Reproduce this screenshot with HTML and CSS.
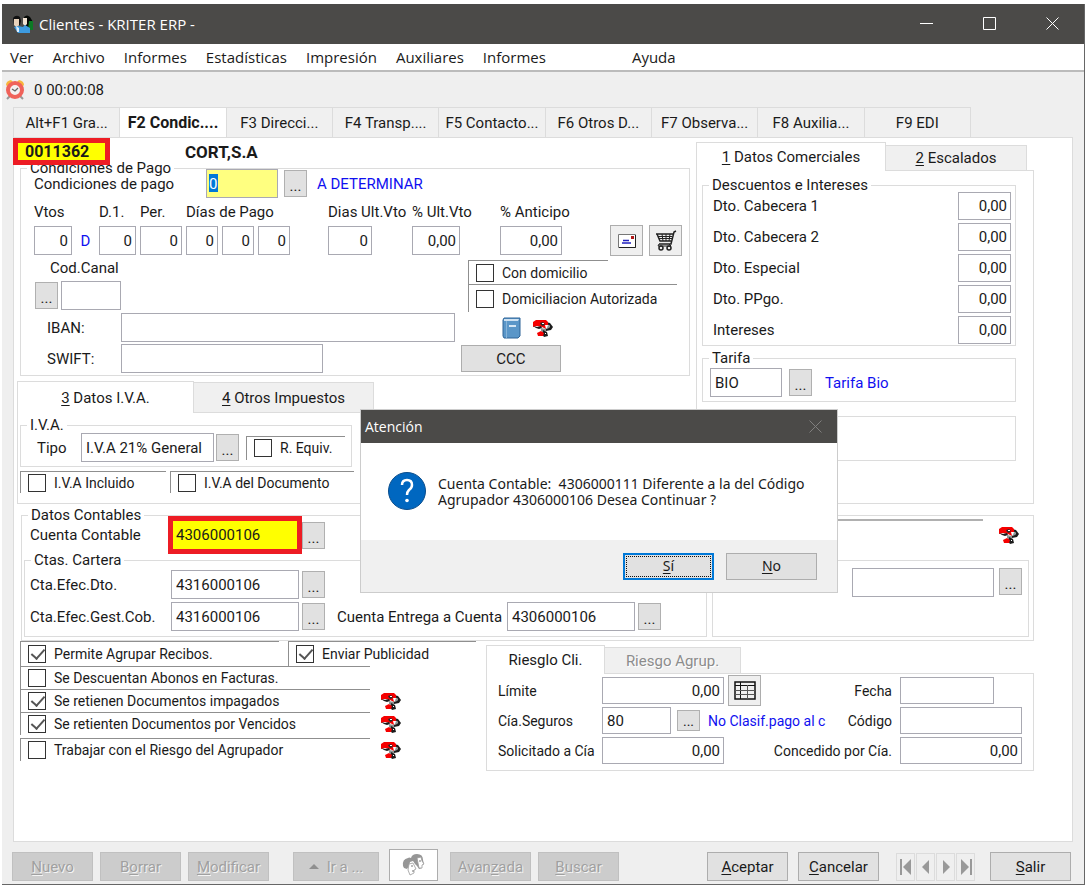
FILE: index.html
```html
<!DOCTYPE html>
<html lang="es">
<head>
<meta charset="utf-8">
<title>Clientes - KRITER ERP -</title>
<link rel="stylesheet" href="styles.css">
</head>
<body>
<svg class="defs" aria-hidden="true">
  <symbol id="phone" viewBox="0 0 20 18">
    <path d="M13 3l4 1 3 4-2 3-5 1-1-2 4-1 1-2-3-2z" fill="#1c1c1c"/>
    <path d="M15 6l2 1-1 2-2 0z" fill="#8d9696"/>
    <path d="M0 3l3-2h10l2 2v3l-3 0 1 4-4-2-5-1-4 1z" fill="#f50000"/>
    <path d="M0 7l4 1 4-1 1 2-3 1-3-1z" fill="#1c1c1c"/>
    <path d="M7 4l3-1 2 2-2 2-2-1z" fill="#2a2a2a"/><path d="M9 4h2v1H9z" fill="#fff"/>
    <path d="M8 9l5 1v2l-2 1-3-1z" fill="#8d9696"/>
    <path d="M10 11l4 2 1 4-4 1-2-3z" fill="#1c1c1c"/>
    <path d="M4 14l4-2 3 2-1 3H5z" fill="#f50000"/><path d="M12 14h1v1h-1z" fill="#fff"/>
  </symbol>
</svg>
<div class="window">
  <header class="titlebar">
    <svg class="app-icon" viewBox="0 0 22 20" aria-hidden="true">
      <path d="M12 3q3-3 6 0l3 5-1 8h-8z" fill="#050805"/><path d="M17 7h4v9h-5z" fill="#0d7a25"/>
      <path d="M1 4q3-4 7-1l1 4-1 4H2z" fill="#111"/>
      <path d="M2 5h5v6l-2 3-3-3z" fill="#e9d3bb"/><path d="M11 4h4v6l-2 2-2-2z" fill="#f0e2d2"/>
      <path d="M2 13l4-1 5 1 2-2 5 3v5H6z" fill="#3d9be0"/><path d="M4 12l3 2 0 4H5z" fill="#dcefff"/>
    </svg>
    <h1 class="title">Clientes - KRITER ERP -</h1>
    <div class="window-controls">
      <button aria-label="Minimizar"><svg viewBox="0 0 14 14"><path d="M0 6.5h13" stroke="#fff"/></svg></button>
      <button aria-label="Maximizar"><svg viewBox="0 0 14 14"><path d="M.5.5h12v12H.5z" fill="none" stroke="#fff"/></svg></button>
      <button aria-label="Cerrar"><svg viewBox="0 0 14 14"><path d="M.5.5l12 12M12.5.5l-12 12" stroke="#fff"/></svg></button>
    </div>
  </header>
  <nav class="menubar">
    <button>Ver</button><button>Archivo</button><button>Informes</button><button>Estadísticas</button><button>Impresión</button><button>Auxiliares</button><button>Informes</button><button class="help">Ayuda</button>
  </nav>
  <div class="toolbar">
    <svg class="clock" viewBox="0 0 20 21" aria-hidden="true">
      <path d="M1 6q0-4 5-5l2 2-5 5zM19 6q0-4-5-5l-2 2 5 5z" fill="#f8b63c"/>
      <path d="M5 17l-3 3M15 17l3 3" stroke="#999" stroke-width="2"/>
      <circle cx="10" cy="11" r="7" fill="#f4f0f0" stroke="#f0625a" stroke-width="4"/>
      <path d="M7 10l3 2 3-3" fill="none" stroke="#666" stroke-width="1.3"/>
    </svg>
    <span>0 00:00:08</span>
  </div>
  <div class="tabs main-tabs" role="tablist">
    <button class="tab" role="tab">Alt+F1 Gra...</button><button class="tab active" role="tab" aria-selected="true">F2 Condic....</button><button class="tab" role="tab">F3 Direcci...</button><button class="tab" role="tab">F4 Transp....</button><button class="tab" role="tab">F5 Contacto...</button><button class="tab" role="tab">F6 Otros D...</button><button class="tab" role="tab">F7 Observa...</button><button class="tab" role="tab">F8 Auxilia...</button><button class="tab" role="tab">F9 EDI</button>
  </div>
  <main class="page">
    <div class="upper">
      <div class="upper-left">
        <div class="client"><strong class="client-code">0011362</strong><strong class="client-name">CORT,S.A</strong></div>

        <fieldset class="group payment">
          <legend>Condiciones de Pago</legend>
          <div class="row">
            <label class="w-payment" for="pago">Condiciones de pago</label>
            <input id="pago" class="focused" value="0">
            <button class="more push" aria-label="Buscar condición">...</button>
            <span class="info">A DETERMINAR</span>
          </div>
          <div class="terms">
            <label class="c1" for="vtos">Vtos</label>
            <label class="c3" for="d1">D.1.</label>
            <label class="c4" for="per">Per.</label>
            <label class="c5" for="dias1">Días de Pago</label>
            <label class="c9" for="ult">Dias Ult.Vto</label>
            <label class="c11" for="pult">% Ult.Vto</label>
            <label class="c13" for="ant">% Anticipo</label>
            <input class="c1 num" id="vtos" value="0"><span class="c2 info">D</span>
            <input class="c3 num" id="d1" value="0">
            <input class="c4 num" id="per" value="0">
            <input class="c5 num" id="dias1" value="0">
            <input class="c6 num" aria-label="Día de pago 2" value="0">
            <input class="c7 num" aria-label="Día de pago 3" value="0">
            <input class="c9 num" id="ult" value="0">
            <input class="c11 num" id="pult" value="0,00">
            <input class="c13 num" id="ant" value="0,00">
            <div class="c15 tool-pair">
              <button class="tool" aria-label="Carta"><svg width="18" height="14" viewBox="0 0 18 14"><path d="M.5.5h17v13H.5z" fill="#fff" stroke="#777"/><path d="M17.500 1v12.500H1" fill="none" stroke="#222"/><path d="M5 6.500h6M4 9h9" stroke="#2222c0" stroke-width="1.500"/><path d="M13 2h3v3h-3z" fill="#b01818"/></svg></button>
              <button class="tool" aria-label="Carro"><svg width="22" height="22" viewBox="0 0 22 22" fill="none" stroke="#222"><path d="M21 1l-2 1-3 12H4M1 4h17M2 4l3 7h11" stroke-width="1.500"/><path d="M3 6.500h14M4 8.500h13M7 4l1 7M11 4v7M15 4l-1 7M4 14l-1 2h13l-2-2"/><circle cx="6" cy="18" r="2" stroke-width="1.500"/><circle cx="14" cy="18" r="2" stroke-width="1.500"/></svg></button>
            </div>
          </div>
          <div class="channel-row">
            <div>
              <label class="channel-label" for="canal">Cod.Canal</label>
              <div class="row channel"><button class="more" aria-label="Buscar canal">...</button><input id="canal"></div>
            </div>
            <div class="debit">
              <label class="check debit-a"><input type="checkbox">Con domicilio</label>
              <label class="check debit-b"><input type="checkbox">Domiciliacion Autorizada</label>
            </div>
          </div>
          <div class="bank">
            <label for="iban">IBAN:</label><input id="iban">
            <div class="bank-icons">
              <svg width="19" height="22" viewBox="0 0 19 22" aria-hidden="true"><path d="M2 1h16v18l-2 2H2L1 19V3z" fill="#5a96c8" stroke="#2f6598"/><path d="M2 2h15l-1 2H2z" fill="#cfe2f2"/><path d="M4.500 4v17" stroke="#86b3d8"/><path d="M7 8h7v2H7z" fill="#d5e6f4"/></svg>
              <svg class="phone"><use href="#phone"/></svg>
            </div>
            <label for="swift">SWIFT:</label><input id="swift" class="swift">
            <button class="btn ccc">CCC</button>
          </div>
        </fieldset>

        <div class="tab-control vat">
          <div class="tabs" role="tablist"><button class="tab active" role="tab" aria-selected="true"><span><u>3</u> Datos I.V.A.</span></button><button class="tab" role="tab"><span><u>4</u> Otros Impuestos</span></button></div>
          <div class="panel">
            <fieldset class="group vat-group">
              <legend>I.V.A.</legend>
              <div class="row">
                <label class="w-type" for="tipo">Tipo</label><input id="tipo" value="I.V.A 21% General">
                <button class="more" aria-label="Buscar tipo">...</button>
                <label class="check equiv"><input type="checkbox">R. Equiv.</label>
              </div>
            </fieldset>
            <div class="vat-checks"><label class="check"><input type="checkbox">I.V.A Incluido</label><label class="check doc"><input type="checkbox">I.V.A del Documento</label></div>
          </div>
        </div>
      </div>

      <div class="tab-control commercial">
        <div class="tabs" role="tablist"><button class="tab active" role="tab" aria-selected="true"><span><u>1</u> Datos Comerciales</span></button><button class="tab" role="tab"><span><u>2</u> Escalados</span></button></div>
        <div class="panel">
          <fieldset class="group discounts">
            <legend>Descuentos e Intereses</legend>
            <label for="dc1">Dto. Cabecera 1</label><input class="num" id="dc1" value="0,00">
            <label for="dc2">Dto. Cabecera 2</label><input class="num" id="dc2" value="0,00">
            <label for="desp">Dto. Especial</label><input class="num" id="desp" value="0,00">
            <label for="dpp">Dto. PPgo.</label><input class="num" id="dpp" value="0,00">
            <label for="int">Intereses</label><input class="num" id="int" value="0,00">
          </fieldset>
          <fieldset class="group rate">
            <legend>Tarifa</legend>
            <input aria-label="Tarifa" value="BIO"><button class="more" aria-label="Buscar tarifa">...</button><span class="info">Tarifa Bio</span>
          </fieldset>
          <fieldset class="group spare"></fieldset>
        </div>
      </div>
    </div>

    <fieldset class="group ledger">
      <legend>Datos Contables</legend>
      <div class="ledger-top">
        <label class="w-ledger" for="cuenta">Cuenta Contable</label><input id="cuenta" class="marked" value="4306000106">
        <button class="more" aria-label="Buscar cuenta">...</button>
        <div class="rule"></div><svg class="phone"><use href="#phone"/></svg>
      </div>
      <div class="ledger-groups">
        <fieldset class="group portfolio">
          <legend>Ctas. Cartera</legend>
          <div class="row"><label for="cdto">Cta.Efec.Dto.</label><input id="cdto" value="4316000106"><button class="more" aria-label="Buscar">...</button></div>
          <div class="row"><label for="ccob">Cta.Efec.Gest.Cob.</label><input id="ccob" value="4316000106"><button class="more" aria-label="Buscar">...</button>
            <label class="delivery" for="cent">Cuenta Entrega a Cuenta</label><input id="cent" value="4306000106"><button class="more" aria-label="Buscar">...</button></div>
        </fieldset>
        <fieldset class="group other-account"><input aria-label="Otra cuenta"><button class="more" aria-label="Buscar">...</button></fieldset>
      </div>
    </fieldset>

    <div class="lower">
      <div class="options">
        <div class="option first"><label class="check"><input type="checkbox" checked>Permite Agrupar Recibos.</label><label class="check publicity"><input type="checkbox" checked>Enviar Publicidad</label></div>
        <div class="option"><label class="check"><input type="checkbox">Se Descuentan Abonos en Facturas.</label></div>
        <div class="option"><label class="check"><input type="checkbox" checked>Se retienen Documentos impagados</label><svg class="phone"><use href="#phone"/></svg></div>
        <div class="option"><label class="check"><input type="checkbox" checked>Se retienten Documentos por Vencidos</label><svg class="phone"><use href="#phone"/></svg></div>
        <div class="option last"><label class="check"><input type="checkbox">Trabajar con el Riesgo del Agrupador</label><svg class="phone"><use href="#phone"/></svg></div>
      </div>
      <div class="tab-control risk">
        <div class="tabs" role="tablist"><button class="tab active" role="tab" aria-selected="true">Riesglo Cli.</button><button class="tab" role="tab" disabled>Riesgo Agrup.</button></div>
        <div class="panel">
          <div class="risk-row"><label class="w-risk" for="lim">Límite</label><input class="num amount" id="lim" value="0,00">
            <button class="tool grid-tool" aria-label="Tabla"><svg width="22" height="19" viewBox="0 0 22 19" fill="none" stroke="#111"><path d="M1 1h20v17H1z" stroke-width="1.500"/><path d="M1 4.500h20M6.500 1v17" /><path d="M1 9.500h20M1 13.500h20M13.500 4v14" stroke="#555"/></svg></button>
            <label class="side" for="fecha">Fecha</label><div class="cell"><input id="fecha" class="date"></div></div>
          <div class="risk-row"><label class="w-risk" for="seg">Cía.Seguros</label><input class="insurer" id="seg" value="80">
            <button class="more small" aria-label="Buscar compañía">...</button><span class="info">No Clasif.pago al c</span>
            <label class="side" for="cod">Código</label><div class="cell"><input id="cod"></div></div>
          <div class="risk-row"><label class="w-risk" for="sol">Solicitado a Cía</label><input class="num amount" id="sol" value="0,00">
            <label class="side" for="conc">Concedido por Cía.</label><div class="cell"><input id="conc" class="num" value="0,00"></div></div>
        </div>
      </div>
    </div>
  </main>

  <footer class="actions">
    <div class="set"><button class="btn" disabled><span><u>N</u>uevo</span></button><button class="btn" disabled><span>B<u>o</u>rrar</span></button><button class="btn" disabled><span><u>M</u>odificar</span></button></div>
    <button class="btn goto" disabled><svg width="10" height="5" viewBox="0 0 10 5"><path d="M5 0l5 5H0z" fill="#8f8f8f"/></svg>Ir a ...</button>
    <button class="btn faces" aria-label="Contactos"><svg width="26" height="24" viewBox="0 0 26 24"><path d="M2 13q-1-7 5-8 1-1 3 0 1-4 6-4 6 0 6 6l1 4-2 1v3l-3 1-2-3-2-2-2-3-3 1-1 4-2 3-3-1z" fill="#969696"/><path d="M8 11l4-1 2 4 1 2-2 1 0 3-4 2-2-5zM16 5l4-1 1 4 2 3-2 1 0 3-3 0z" fill="#fff" stroke="#999" stroke-width=".8"/><path d="M10 13h2M18 8h2M11 18h2" stroke="#777"/></svg></button>
    <div class="set"><button class="btn" disabled><span>Avan<u>z</u>ada</span></button><button class="btn" disabled><span><u>B</u>uscar</span></button></div>
    <div class="set confirm"><button class="btn"><span><u>A</u>ceptar</span></button><button class="btn"><span><u>C</u>ancelar</span></button></div>
    <div class="nav">
      <button aria-label="Primero"><svg viewBox="0 0 14 18"><path d="M2 1v16" stroke="#999" stroke-width="2"/><path d="M12 1v16L4 9z" fill="#999"/></svg></button>
      <button aria-label="Anterior"><svg viewBox="0 0 14 18"><path d="M10 2v14L3 9z" fill="#999"/></svg></button>
      <button aria-label="Siguiente"><svg viewBox="0 0 14 18"><path d="M4 2v14l7-7z" fill="#999"/></svg></button>
      <button aria-label="Último"><svg viewBox="0 0 14 18"><path d="M12 1v16" stroke="#999" stroke-width="2"/><path d="M2 1v16l8-8z" fill="#999"/></svg></button>
    </div>
    <button class="btn"><span><u>S</u>alir</span></button>
  </footer>

  <section class="dialog" role="dialog" aria-labelledby="dialog-title">
    <header><h2 id="dialog-title">Atención</h2><button aria-label="Cerrar"><svg width="13" height="13" viewBox="0 0 13 13"><path d="M.5.5l12 12M12.500.5l-12 12" stroke="#807f7e"/></svg></button></header>
    <div class="message">
      <svg width="38" height="38" viewBox="0 0 38 38" aria-hidden="true"><circle cx="19" cy="19" r="18.500" fill="#0067c0" stroke="#0a4d8c"/><path d="M14 13q0-5 5-5t5 5q0 3-3 5-2 2-2 5" fill="none" stroke="#fff" stroke-width="2.500"/><circle cx="19" cy="28.500" r="1.800" fill="#fff"/></svg>
      <p>Cuenta Contable:&nbsp; 4306000111 Diferente a la del Código<br>Agrupador 4306000106 Desea Continuar ?</p>
    </div>
    <div class="answers"><button class="answer default"><span><u>S</u>í</span></button><button class="answer"><span><u>N</u>o</span></button></div>
  </section>
</div>
</body>
</html>
```
FILE: styles.css
```css
* { box-sizing: border-box; }
html { height: 100%; }
body { margin: 0; min-height: 100%; padding: 4px 4px 6px 2px; display: flex; flex-direction: column; background: #fff; color: #1a1a1a; font: 15px/18px Roboto, "Liberation Sans", sans-serif; }
button, input { font: inherit; color: inherit; margin: 0; }
button { padding: 0; border: 0; background: none; white-space: nowrap; }
label, .info { white-space: nowrap; }
svg { display: block; flex: none; }
u { text-underline-offset: 2px; }
.defs { position: absolute; width: 0; height: 0; }
.phone { width: 20px; height: 18px; }
.window { position: relative; flex: 1; display: flex; flex-direction: column; background: #efefef; border-right: 1px solid #666; border-bottom: 1px solid #666; }

.titlebar { display: flex; align-items: center; height: 40px; padding-left: 10px; background: #4b4a48; color: #fff; }
.app-icon { width: 22px; height: 20px; }
.title { flex: 1; margin: 0 0 0 5px; font: 15px/20px "Open Sans", "Noto Sans", sans-serif; }
.window-controls { display: flex; }
.window-controls button { width: 63px; height: 40px; display: grid; place-items: center; }
.window-controls svg { width: 14px; height: 14px; }

.menubar { display: flex; gap: 19px; height: 28px; padding: 0 8px; background: #fff; border-bottom: 2px solid #bbb; font: 15px/26px "Open Sans", "Noto Sans", sans-serif; }
.menubar .help { margin-left: 67px; }
.toolbar { display: flex; align-items: center; gap: 9px; height: 35px; padding-left: 3px; }
.clock { width: 20px; height: 21px; }

.tabs { display: flex; align-items: flex-end; }
.tab { border: 1px solid #dcdcdc; border-left-width: 0; border-bottom: 0; background: #f0f0f0; }
.tab:first-child { border-left-width: 1px; }
.tab.active { background: #fff; }
.tab:disabled { color: #8c8c8c; text-shadow: 1px 1px #fff; }
.main-tabs { max-width: 969px; padding-left: 11px; }
.main-tabs .tab { flex: 1 1 0; height: 30px; }
.main-tabs .active { font-size: 16px; font-weight: 700; }

.page { flex: 1; margin: 0 11px; padding-right: 38px; background: #fff; border: 1px solid #dcdcdc; }
.upper { display: grid; grid-template-columns: 1fr 338px; gap: 6px; }
.client { position: relative; height: 30px; padding-left: 171px; font-size: 17px; line-height: 28px; }
.client-code { position: absolute; z-index: 1; left: -1px; top: 0; width: 97px; height: 27px; padding-left: 7px; font-size: 16px; line-height: 18px; border: 5px solid #ed1c24; background: #ff0; }

.group { position: relative; min-width: 0; margin: 0; padding: 0; border: 1px solid #dcdcdc; }
.group > legend { position: absolute; top: -10px; left: 6px; padding: 0 3px; background: #fff; }
.row { display: flex; align-items: center; }
input:not([type="checkbox"]) { width: 100%; min-width: 0; height: 29px; padding: 0 4px; border: 1px solid #a9a9b2; border-radius: 0; background: #fff; }
input.num { text-align: right; padding-right: 3px; }
.more { flex: none; width: 23px; height: 27px; padding-top: 5px; border: 1px solid #b0b0b0; background: #e1e1e1; line-height: 18px; }
.btn { border: 1px solid #adadad; background: #e1e1e1; }
.tool { width: 33px; height: 31px; display: grid; place-items: center; flex: none; border: 1px solid #adadad; background: #efefef; }
.info { color: #1010f0; }
.check { display: flex; align-items: center; gap: 8px; padding-left: 7px; border-top: 1px solid #8f8f8f; border-left: 1px solid #8f8f8f; font-size: 14px; }
.check input { appearance: none; flex: none; position: relative; width: 18px; height: 18px; border: 1px solid #333; background: #fff; }
.check input:checked::before { content: ""; position: absolute; left: 5px; top: 0; width: 6px; height: 11px; border: solid #555; border-width: 0 2px 2px 0; transform: rotate(42deg); }

.payment { margin-left: 6px; padding: 0 7px 2px 13px; }
.w-payment { width: 172px; }
input.focused:not([type="checkbox"]) { width: 72px; padding-left: 2px; color: #fff; background: linear-gradient(#0078d7, #0078d7) 2px 4px / 9px 18px no-repeat, #ffff80; }
.push { margin: 0 10px 0 6px; }
.terms { display: grid; grid-template-columns: 38px 19px 37px 42px 32px 32px 32px 30fr 44px 32fr 48px 32fr 62px 40fr 72px; grid-template-rows: 27px 31px; column-gap: 4px; align-items: center; }
.terms > label { width: 0; }
.c1 { grid-column: 1; } .c2 { grid-column: 2; text-align: center; } .c3 { grid-column: 3; } .c4 { grid-column: 4; }
.c5 { grid-column: 5; } .c6 { grid-column: 6; } .c7 { grid-column: 7; } .c9 { grid-column: 9; }
.c11 { grid-column: 11; } .c13 { grid-column: 13; } .c15 { grid-column: 15; }
.tool-pair { display: flex; gap: 6px; }
.channel-row { display: grid; grid-template-columns: 1fr 214px; height: 57px; }
.channel-label { display: block; padding-left: 16px; line-height: 25px; }
.channel { gap: 3px; padding-left: 1px; }
.channel input:not([type="checkbox"]) { width: 60px; }
.debit { padding-top: 4px; }
.debit-a { width: 140px; height: 24px; }
.debit-b { width: 209px; height: 28px; }
.bank { display: grid; grid-template-columns: 87px 334px 1fr; row-gap: 2px; align-items: center; }
.bank label { padding-left: 13px; }
.bank-icons { display: flex; align-items: center; gap: 12px; padding-left: 47px; }
.bank input.swift:not([type="checkbox"]) { width: 202px; }
.ccc { width: 100px; height: 27px; margin-left: 6px; }

.tab-control .panel { border: 1px solid #dcdcdc; }
.tab-control .tab.active { position: relative; margin-bottom: -1px; }
.vat { margin: 5px 0 0 3px; }
.vat .tab { width: 180px; height: 30px; }
.vat .tab.active { width: 177px; height: 32px; }
.vat .panel { padding: 12px 0 10px 2px; }
.vat-group { width: 332px; padding: 7px 0 4px 16px; }
.w-type { flex: none; width: 44px; }
.vat-group input:not([type="checkbox"]) { width: 133px; margin-right: 2px; }
.equiv { width: 99px; height: 24px; margin-left: 7px; }
.vat-checks { display: flex; gap: 4px; margin-top: 4px; }
.vat-checks .check { width: 146px; height: 22px; }
.vat-checks .doc { width: 184px; }

.commercial { display: flex; flex-direction: column; margin-top: 4px; }
.commercial .tab { width: 141px; height: 25px; }
.commercial .tab.active { width: 190px; height: 29px; }
.commercial .panel { flex: 1; padding: 14px 17px 0 5px; }
.discounts { display: grid; grid-template-columns: 1fr 53px; row-gap: 3px; align-items: center; padding: 6px 4px 1px 10px; }
.discounts input:not([type="checkbox"]) { height: 28px; }
.rate { display: flex; align-items: center; margin-top: 12px; padding: 9px 4px 4px 7px; }
.rate input:not([type="checkbox"]) { width: 72px; margin-right: 7px; }
.rate .info { margin-left: 13px; }
.spare { height: 45px; margin-top: 14px; }

.ledger { margin: 11px 0 0 7px; padding: 0 4px 3px 2px; }
.ledger-top { display: flex; align-items: center; height: 38px; padding: 0 10px 0 6px; }
.w-ledger { width: 138px; }
.ledger-top .marked:not([type="checkbox"]) { width: 134px; height: 38px; padding-left: 3px; border: 5px solid #ed1c24; background: #ff0; z-index: 1; }
.rule { align-self: flex-start; flex: 0 1 300px; height: 2px; margin: 3px 16px 0 auto; background: #b0b0b0; }
.ledger-groups { display: grid; grid-template-columns: 1fr 317px; gap: 5px; margin-top: 6px; }
.portfolio { padding: 9px 0 5px 5px; display: grid; gap: 3px; }
.portfolio label { width: 141px; }
.portfolio input:not([type="checkbox"]) { width: 128px; margin-right: 3px; }
.portfolio .delivery { width: 170px; margin-left: 12px; }
.other-account { display: flex; justify-content: flex-end; gap: 5px; padding: 7px 6px 0 0; }
.other-account input:not([type="checkbox"]) { width: 142px; }

.lower { display: grid; grid-template-columns: 456px 1fr; gap: 10px; margin-left: 6px; }
.option { display: flex; gap: 11px; height: 23px; }
.option .check { width: 350px; }
.option .phone { margin-top: 3px; }
.option.first { height: 25px; gap: 9px; }
.option.first .check { width: 259px; }
.option.first .publicity { width: 188px; }
.option.last { margin-top: 3px; }
.risk { padding-top: 4px; }
.risk .tab { width: 136px; height: 26px; }
.risk .tab.active { width: 119px; height: 29px; }
.risk .panel { display: grid; gap: 3px; padding: 3px 11px 6px; font-size: 14px; }
.risk-row { display: flex; align-items: center; height: 27px; }
.risk input:not([type="checkbox"]) { height: 27px; font-size: 15px; }
.w-risk { flex: none; width: 104px; }
.risk input.amount:not([type="checkbox"]) { width: 122px; }
.risk input.insurer:not([type="checkbox"]) { width: 69px; }
.grid-tool { margin-left: 4px; }
.small { height: 21px; margin: 0 8px 0 6px; padding-top: 0; }
.side { margin: 0 8px 0 auto; }
.cell { flex: none; width: 122px; }
.risk input.date:not([type="checkbox"]) { width: 94px; }

.actions { display: flex; align-items: flex-end; height: 42px; padding: 0 13px 3px 10px; }
.set { display: flex; gap: 7px; }
.actions .btn { width: 81px; height: 29px; }
.actions .btn:disabled { color: #a0a0a0; background: #ccc; border-color: #c0c0c0; text-shadow: 1px 1px #f4f4f4; }
.actions .goto { display: flex; align-items: center; justify-content: center; gap: 8px; width: 86px; margin: 0 10px 0 24px; }
.actions .faces { display: grid; place-items: center; width: 49px; height: 32px; margin-right: 12px; background: #fff; }
.confirm { margin-left: auto; gap: 10px; }
.nav { display: flex; gap: 1px; margin: 0 15px 0 17px; }
.nav button { width: 19px; height: 28px; display: grid; place-items: center; border: 1px solid #dcdcdc; }
.nav svg { width: 14px; height: 18px; }

.dialog { position: absolute; z-index: 2; left: 359px; top: 406px; width: 476px; background: #fff; font: 14px/16px "Noto Sans", "Open Sans", sans-serif; box-shadow: 0 0 0 1px #ccc; }
.dialog header { display: flex; align-items: center; justify-content: space-between; height: 33px; padding: 0 15px 0 4px; background: #4b4a48; color: #fff; }
.dialog h2 { margin: 0; font: 14px/20px "Open Sans", sans-serif; }
.message { display: flex; gap: 12px; height: 97px; padding: 29px 27px 0; }
.message p { margin: 4px 0 0; white-space: nowrap; }
.answers { display: flex; justify-content: flex-end; align-items: center; gap: 12px; height: 52px; padding-right: 20px; background: #f0f0f0; }
.answer { width: 91px; height: 27px; border: 1px solid #adadad; background: #e1e1e1; }
.answer.default { border: 2px solid #0078d7; outline: 1px dotted #111; outline-offset: -4px; }
```
